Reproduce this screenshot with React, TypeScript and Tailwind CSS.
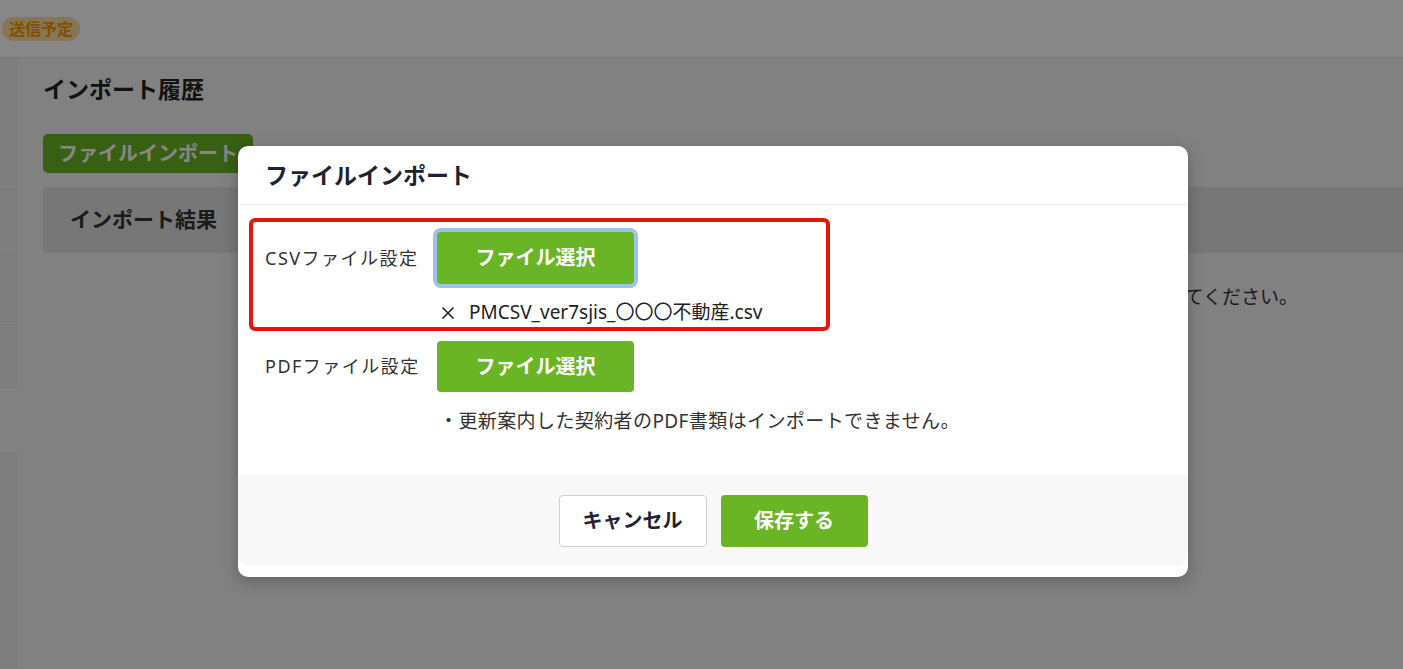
import React from 'react'

const FONT = "font-['Noto_Sans','Noto_Sans_CJK_JP',sans-serif]"

function SidebarStrip() {
  const rows = [false, false, false, false, false, true]
  return (
    <div className="w-[17px] flex-shrink-0 flex flex-col bg-[#eeeeee]">
      {rows.map((active, i) => (
        <div
          key={i}
          className={`h-[66px] border-b border-[#e2e2e2] ${active ? 'bg-[#f5f5f5]' : ''}`}
        />
      ))}
      <div className="flex-1" />
    </div>
  )
}

function PageBehind() {
  return (
    <div className="flex flex-col h-full">
      <header className="h-[58px] flex items-center border-b border-[#e4e4e4] bg-white flex-shrink-0">
        <span className="ml-[2px] h-[24px] px-[7px] rounded-full bg-[#ffdf9e] text-[#f29600] text-[16px] font-bold leading-[24px]">
          送信予定
        </span>
      </header>
      <div className="flex flex-1 min-h-0">
        <SidebarStrip />
        <main className="flex-1 bg-[#f4f4f4] pl-[26px]">
          <h1 className="mt-[19px] h-[24px] leading-[24px] text-[23px] font-bold text-[#222]">
            インポート履歴
          </h1>
          <button
            type="button"
            className="mt-[33px] h-[39px] w-[210px] rounded-[5px] bg-[#6ab525] text-white text-[20px] font-bold"
          >
            ファイルインポート
          </button>
          <div className="mt-[14px] h-[66px] bg-[#e0e0e0] flex items-center pl-[27px] text-[21px] font-bold text-[#333]">
            インポート結果
          </div>
          <p className="pt-[32px] pr-[105px] text-right leading-[24px] text-[19px] text-[#333]">
            ファイルをインポートしてください。
          </p>
        </main>
      </div>
    </div>
  )
}

function PickButton({ focused }: { focused?: boolean }) {
  return (
    <button
      type="button"
      className={`w-[197px] rounded-[4px] bg-[#6ab525] text-white text-[20px] font-bold ${
        focused ? 'h-[52px] ring-4 ring-[#9cc3ee]' : 'h-[51px]'
      }`}
    >
      ファイル選択
    </button>
  )
}

function ImportModal() {
  return (
    <div className="absolute left-[238px] top-[146px] w-[950px] bg-white rounded-[10px] pb-[11px] shadow-[0_4px_16px_rgba(0,0,0,0.25)]">
      <div className="h-[59px] px-[27px] flex items-center border-b border-[#eaeaea] text-[23px] font-bold text-[#1f2330]">
        ファイルインポート
      </div>

      <div className="px-[11px] pt-[13px] pb-[42px] text-[#333]">
        {/* CSV row, highlighted */}
        <div className="w-[581px] border-4 border-[#e5170d] rounded-[6px] pl-[12px] pt-[10px] pb-[3px]">
          <div className="flex items-center">
            <span className="w-[172px] text-[18px] tracking-[1.5px]">CSVファイル設定</span>
            <PickButton focused />
          </div>
          <div className="mt-[16px] pl-[176px] flex items-center h-[24px] text-[19px] text-[#222]">
            <svg width="14" height="14" viewBox="0 0 14 14" className="mt-[2px] text-[#222]">
              <path d="M1.5 1.5 12.5 12.5M12.5 1.5 1.5 12.5" stroke="currentColor" strokeWidth="1.6" />
            </svg>
            <span className="ml-[14px]">PMCSV_ver7sjis_〇〇〇不動産.csv</span>
          </div>
        </div>

        {/* PDF row */}
        <div className="mt-[10px] pl-[16px] flex items-center">
          <span className="w-[172px] text-[18px] tracking-[1.5px]">PDFファイル設定</span>
          <PickButton />
        </div>
        <p className="mt-[17px] pl-[190px] leading-[24px] text-[19px] tracking-[0.4px]">
          ・更新案内した契約者のPDF書類はインポートできません。
        </p>
      </div>

      <div className="h-[91px] bg-[#f8f8f8] rounded-b-[10px] flex items-center justify-center gap-[14px]">
        <button
          type="button"
          className="w-[148px] h-[52px] rounded-[4px] border border-[#cfcfcf] bg-white text-[20px] font-bold text-[#1f2330]"
        >
          キャンセル
        </button>
        <button
          type="button"
          className="w-[147px] h-[52px] rounded-[4px] bg-[#6ab525] text-[20px] font-bold text-white"
        >
          保存する
        </button>
      </div>
    </div>
  )
}

export default function App() {
  return (
    <div className={`relative w-full h-[669px] overflow-hidden bg-white ${FONT}`}>
      <PageBehind />
      <div className="absolute inset-0 bg-black/[0.47]" />
      <ImportModal />
    </div>
  )
}
